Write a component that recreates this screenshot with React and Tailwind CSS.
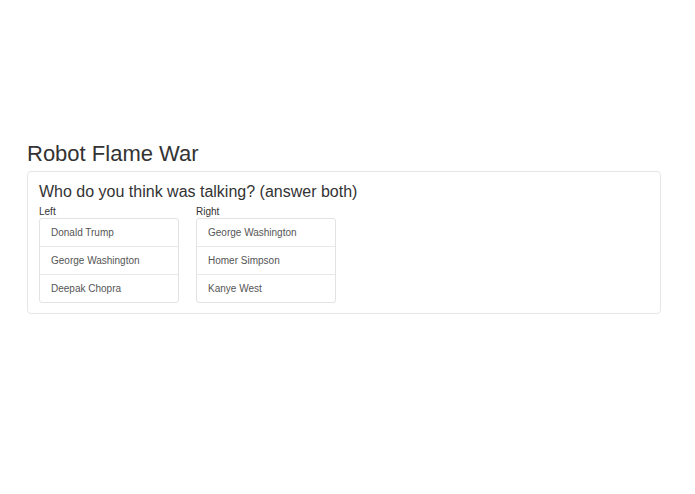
import React from 'react';

const left = ['Donald Trump', 'George Washington', 'Deepak Chopra'];
const right = ['George Washington', 'Homer Simpson', 'Kanye West'];

const Choices = ({ label, items }) => (
  <div className="w-[140px]">
    <div className="text-[10px] leading-[13px] text-[#333]">{label}</div>
    <div className="border border-[#e3e3e3] rounded-[3px] bg-white">
      {items.map((item, i) => (
        <div
          key={item}
          className={`px-[11px] flex items-center text-[10px] text-[#555] ${i > 0 ? 'h-[28px] border-t border-[#e8e8e8]' : 'h-[27px]'}`}
        >
          {item}
        </div>
      ))}
    </div>
  </div>
);

export default function App() {
  return (
    <div className="w-[695px] h-[494px] bg-white" style={{ fontFamily: '"Liberation Sans", Arial, sans-serif' }}>
      <div className="pt-[140px] pl-[27px] pr-[34px]">
        <h2 className="text-[22px] leading-[28px] text-[#333] mb-[3px]">Robot Flame War</h2>
        <div className="border border-[#e6e6e6] rounded-[4px] px-[11px] pt-[10px] pb-[10px]">
          <h3 className="text-[16px] leading-[20px] text-[#333] mb-[3px]">Who do you think was talking? (answer both)</h3>
          <div className="flex gap-[17px]">
            <Choices label="Left" items={left} />
            <Choices label="Right" items={right} />
          </div>
        </div>
      </div>
    </div>
  );
}
